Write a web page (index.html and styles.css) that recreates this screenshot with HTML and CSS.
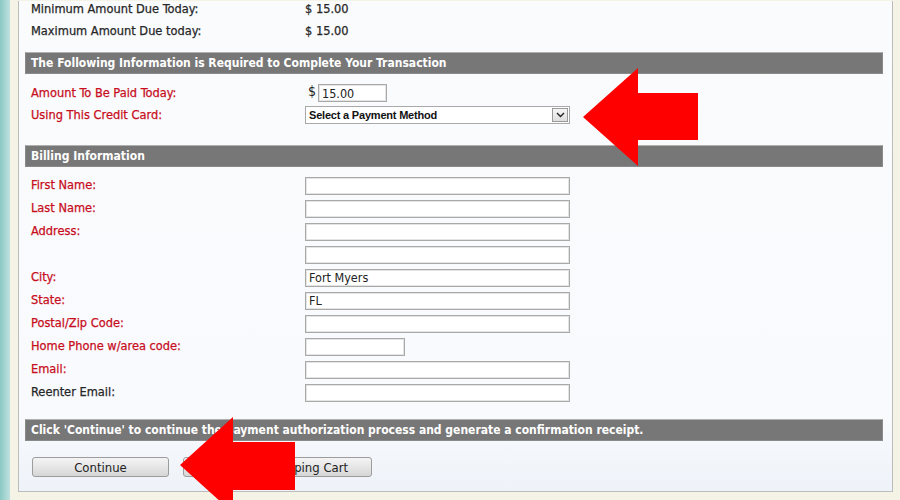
FILE: index.html
```html
<!DOCTYPE html>
<html>
<head>
<meta charset="utf-8">
<link rel="stylesheet" href="styles.css">
</head>
<body>
<div class="page">
  <div class="rail"></div>
  <div class="main">
    <div class="panel">
      <div class="summary">
        <div class="row srow"><span class="label dark">Minimum Amount Due Today:</span><span class="val">$ 15.00</span></div>
        <div class="row srow"><span class="label dark">Maximum Amount Due today:</span><span class="val">$ 15.00</span></div>
      </div>
      <div class="bar bar-first">The Following Information is Required to Complete Your Transaction</div>
      <div class="pay">
        <div class="row prow"><span class="label red">Amount To Be Paid Today:</span><span class="field"><span class="dollar">$</span><span class="input amount">15.00</span></span></div>
        <div class="row prow"><span class="label red">Using This Credit Card:</span><span class="field"><span class="select"><span class="select-text">Select a Payment Method</span><span class="select-btn"><svg width="9" height="6" viewBox="0 0 9 6"><path d="M1 1 L4.5 4.5 L8 1" fill="none" stroke="#222" stroke-width="1.4"/></svg></span></span></span></div>
      </div>
      <div class="bar bar-billing">Billing Information</div>
      <div class="billing">
        <div class="row brow"><span class="label red">First Name:</span><span class="field"><span class="input wide"></span></span></div>
        <div class="row brow"><span class="label red">Last Name:</span><span class="field"><span class="input wide"></span></span></div>
        <div class="row brow"><span class="label red">Address:</span><span class="field"><span class="input wide"></span></span></div>
        <div class="row brow"><span class="label"></span><span class="field"><span class="input wide"></span></span></div>
        <div class="row brow"><span class="label red">City:</span><span class="field"><span class="input wide">Fort Myers</span></span></div>
        <div class="row brow"><span class="label red">State:</span><span class="field"><span class="input wide">FL</span></span></div>
        <div class="row brow"><span class="label red">Postal/Zip Code:</span><span class="field"><span class="input wide"></span></span></div>
        <div class="row brow"><span class="label red">Home Phone w/area code:</span><span class="field"><span class="input phone"></span></span></div>
        <div class="row brow"><span class="label red">Email:</span><span class="field"><span class="input wide"></span></span></div>
        <div class="row brow"><span class="label dark">Reenter Email:</span><span class="field"><span class="input wide"></span></span></div>
      </div>
      <div class="bar bar-footer">Click 'Continue' to continue the payment authorization process and generate a confirmation receipt.</div>
      <div class="buttons">
        <span class="btn btn-continue">Continue</span>
        <span class="btn btn-cart">Return to Shopping Cart</span>
      </div>
    </div>
  </div>
  <svg class="arrows" width="900" height="500" viewBox="0 0 900 500">
    <polygon points="583,117 638,68 638,93 698,93 698,140 638,140 638,166" fill="#ff0000"/>
    <polygon points="180,465 233,417 233,442 295,442 295,490 233,490 233,513" fill="#ff0000"/>
  </svg>
</div>
</body>
</html>
```
FILE: styles.css
```css
html, body {
  margin: 0;
  padding: 0;
}
body {
  width: 900px;
  height: 500px;
  overflow: hidden;
  font-family: "DejaVu Sans Condensed", "DejaVu Sans", sans-serif;
  font-size: 12.7px;
  color: #2b2b2b;
}
.page {
  position: relative;
  display: flex;
  width: 900px;
  height: 500px;
}
.rail {
  width: 10px;
  flex: none;
  background: linear-gradient(90deg, #8cc8c4 0%, #bfe2e0 100%);
}
.main {
  flex: 1;
  background: #f5f3e5;
  padding: 0 7px 8px 8px;
  display: flex;
  flex-direction: column;
  justify-content: flex-end;
}
.panel {
  border: 1px solid #bcbcbc;
  border-top: none;
  background: linear-gradient(180deg, #f9fbfd 0%, #f8fafd 85%, #eef3f9 100%);
  padding: 0 9px 15px 6px;
  height: 491px;
  box-sizing: border-box;
  overflow: hidden;
}
.summary {
  margin-top: -3px;
}
.row {
  display: flex;
  align-items: center;
  padding-left: 6px;
}
.srow { height: 22px; }
.prow { height: 22px; }
.brow { height: 23px; }
.label {
  width: 274px;
  flex: none;
  -webkit-text-stroke: 0.25px currentColor;
  margin-top: -2px;
}
.red { color: #c80d1c; }
.dark { color: #262626; }
.val {
  color: #262626;
  -webkit-text-stroke: 0.25px currentColor;
  margin-top: -2px;
}
.field {
  display: flex;
  align-items: center;
}
.bar {
  height: 22px;
  box-sizing: border-box;
  background: #777777;
  border: 1px solid #8a8a8a;
  border-top-color: #b0b0b0;
  color: #ffffff;
  font-weight: bold;
  font-size: 12px;
  padding-left: 5px;
  display: flex;
  align-items: center;
}
.bar-first { margin-top: 10px; }
.pay { margin-top: 8px; }
.bar-billing { margin-top: 19px; }
.billing { margin-top: 7px; }
.bar-footer { margin-top: 15px; }
.dollar {
  width: 8px;
  padding-left: 3px;
  margin-right: 2px;
  font-size: 14px;
  margin-top: -4px;
  color: #222;
}
.input {
  height: 18px;
  box-sizing: border-box;
  background: #ffffff;
  border: 1px solid #a9a9a9;
  box-shadow: inset 0 0 0 1px #e4e4e4;
  padding: 0 3px;
  display: flex;
  align-items: center;
  color: #222;
  font-size: 12.5px;
}
.amount { width: 69px; }
.wide { width: 265px; }
.phone { width: 100px; }
.select {
  width: 265px;
  height: 18px;
  box-sizing: border-box;
  border: 1px solid #a9a9a9;
  background: #ffffff;
  display: flex;
  align-items: center;
  justify-content: space-between;
  padding-left: 3px;
}
.select-text {
  font-family: "Liberation Sans", Arial, sans-serif;
  font-weight: bold;
  font-size: 11px;
  color: #111;
  letter-spacing: -0.2px;
}
.select-btn {
  width: 16px;
  height: 14px;
  margin-right: 1px;
  box-sizing: border-box;
  border: 1px solid #9a9a9a;
  background: linear-gradient(180deg, #f6f6f6, #dedede);
  display: flex;
  align-items: center;
  justify-content: center;
}
.buttons {
  margin-top: 16px;
  display: flex;
  padding-left: 7px;
  gap: 14px;
}
.btn {
  height: 20px;
  box-sizing: border-box;
  border: 1px solid #9c9c9c;
  border-radius: 3px;
  background: linear-gradient(180deg, #f4f4f4 0%, #e6e6e6 50%, #d6d6d6 100%);
  color: #222;
  font-size: 13px;
  display: flex;
  align-items: center;
  justify-content: center;
}
.btn-continue { width: 137px; }
.btn-cart { width: 189px; }
.arrows {
  position: absolute;
  left: 0;
  top: 0;
  pointer-events: none;
}
```
